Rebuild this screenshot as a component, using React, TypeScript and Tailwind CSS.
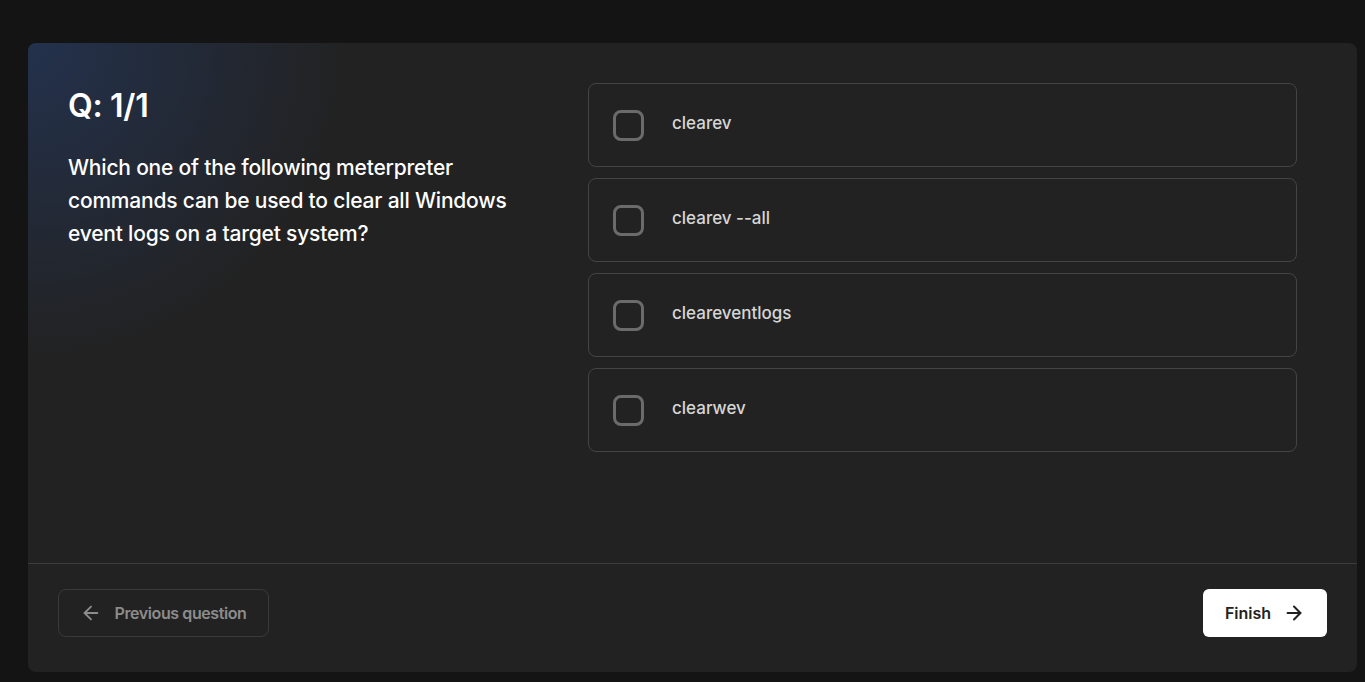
import { ArrowLeft, ArrowRight } from "lucide-react";

const options = ["clearev", "clearev --all", "cleareventlogs", "clearwev"];

export default function App() {
  return (
    <main className="w-full h-[682px] bg-[#141414] pt-[43px] pl-[28px] pr-[8px] pb-[10px] font-['Inter',sans-serif]">
      <div className="h-[629px] rounded-lg bg-[#222222] overflow-hidden flex flex-col">
        {/* Question body */}
        <div className="flex-1 flex gap-10 pl-10 pr-[60px] pt-10 bg-[radial-gradient(circle_at_top_left,rgba(36,58,100,0.65)_0px,rgba(34,34,34,0)_320px)]">
          <div className="w-[480px] shrink-0">
            <h1 className="text-[32px] font-semibold text-white leading-[38px] mt-[4px] tracking-[-0.3px]">
              Q: 1/1
            </h1>
            <p className="w-[460px] mt-[26px] text-[21px] font-medium text-white leading-[33px] tracking-[-0.2px]">
              Which one of the following meterpreter commands can be used to
              clear all Windows event logs on a target system?
            </p>
          </div>

          <div className="flex-1 flex flex-col gap-[11px]">
            {options.map((opt) => (
              <label
                key={opt}
                className="h-[84px] flex items-center rounded-lg border border-[#444444] pl-[24px] cursor-pointer"
              >
                <span className="w-[31px] h-[31px] rounded-[8px] border-[3px] border-[#6b6b6b]" />
                <span className="ml-[28px] text-[17px] font-medium text-[#d6d6d6] -mt-[2px]">
                  {opt}
                </span>
              </label>
            ))}
          </div>
        </div>

        {/* Footer */}
        <div className="h-[109px] border-t border-[#3c3c3c] flex items-start justify-between px-[30px] pt-[25px]">
          <button className="h-12 w-[211px] flex items-center justify-center gap-[12px] rounded-lg border border-[#3a3a3a] text-[#8c8c8c] text-[16px] font-semibold tracking-[-0.4px]">
            <ArrowLeft className="w-[22px] h-[22px]" strokeWidth={2} />
            Previous question
          </button>
          <button className="h-12 w-[124px] flex items-center justify-center gap-[12px] rounded-md bg-white text-[#222222] text-[16px] font-semibold">
            Finish
            <ArrowRight className="w-[22px] h-[22px]" strokeWidth={2.2} />
          </button>
        </div>
      </div>
    </main>
  );
}
